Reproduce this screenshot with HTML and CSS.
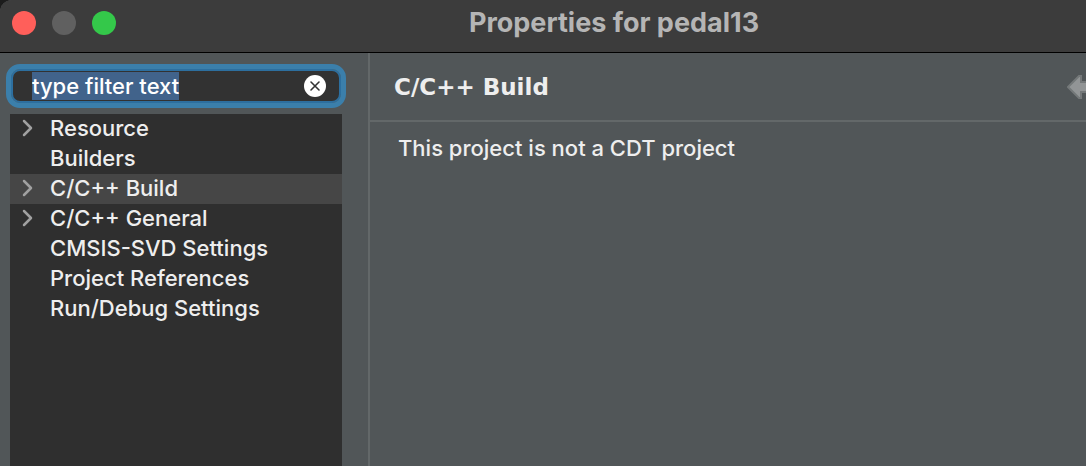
FILE: index.html
```
<!DOCTYPE html>
<html lang="en">

<head>
    <meta charset="UTF-8">
    <meta name="viewport" content="width=device-width, initial-scale=1.0">
    <title>Properties for pedal13</title>
    <link rel="stylesheet" href="styles.css">
</head>

<body>
    <div class="window">
        <header class="title-bar">
            <div class="window-buttons">
                <button class="window-button close" aria-label="Close"></button>
                <button class="window-button minimize" aria-label="Minimize" disabled></button>
                <button class="window-button maximize" aria-label="Maximize"></button>
            </div>
            <h1>Properties for pedal13</h1>
        </header>
        <div class="content">
            <!-- Page list -->
            <aside class="sidebar">
                <div class="filter">
                    <input id="filter-input" type="text" value="type filter text" aria-label="Filter" spellcheck="false">
                    <button class="clear-button" id="clear-button" aria-label="Clear">
                        <svg width="22" height="22" viewBox="0 0 22 22">
                            <circle cx="11" cy="11" r="11" fill="#fff" />
                            <path d="M7 7l8 8M15 7l-8 8" stroke="#333" stroke-width="1.6" stroke-linecap="round" />
                        </svg>
                    </button>
                </div>
                <ul class="tree">
                    <li class="expandable"><a href="#">Resource</a></li>
                    <li><a href="#">Builders</a></li>
                    <li class="expandable selected"><a href="#">C/C++ Build</a></li>
                    <li class="expandable"><a href="#">C/C++ General</a></li>
                    <li><a href="#">CMSIS-SVD Settings</a></li>
                    <li><a href="#">Project References</a></li>
                    <li><a href="#">Run/Debug Settings</a></li>
                </ul>
            </aside>
            <!-- Selected page -->
            <main class="page">
                <div class="page-header">
                    <h2>C/C++ Build</h2>
                    <button class="back-button" aria-label="Back">
                        <svg width="30" height="24" viewBox="0 0 30 24">
                            <path d="M1 12L12 1h2v6h15v10H14v6h-2z" fill="#929596" stroke="#747879" stroke-width="2" />
                        </svg>
                    </button>
                </div>
                <p class="message">This project is not a CDT project</p>
            </main>
        </div>
    </div>
    <script>
        const filterInput = document.getElementById('filter-input');
        const clearButton = document.getElementById('clear-button');
        const tree = document.querySelector('.tree');

        // put a chevron in front of the nodes that have children
        tree.querySelectorAll('.expandable').forEach(item => {
            item.insertAdjacentHTML('afterbegin',
                '<svg class="chevron" width="12" height="18" viewBox="0 0 12 18"><path d="M2 2l7 7-7 7" /></svg>');
        });

        clearButton.addEventListener('click', function () {
            filterInput.value = '';
            filterInput.focus();
        });

        filterInput.focus();
        filterInput.select();
    </script>
</body>

</html>
```
FILE: styles.css
```
body {
    margin: 0;
    background-color: #1c1c1c;
    font-family: Inter, "Liberation Sans", sans-serif;
    font-size: 22px;
    font-weight: 500;
    line-height: 30px;
    color: #eee;
}

button {
    padding: 0;
    border: none;
    background: none;
}

.window {
    display: flex;
    flex-direction: column;
    height: 100vh;
    overflow: hidden;
    border-top-left-radius: 12px;
    background-color: #515658;
}

.title-bar {
    display: flex;
    gap: 26px;
    padding: 8px 0 14px 12px;
    background-color: #3c3c3c;
    border-bottom: 1px solid #000;
}

.window-buttons {
    display: flex;
    align-items: center;
    gap: 16px;
}

.window-button {
    width: 24px;
    height: 24px;
    border-radius: 50%;
}

.close {
    background-color: #ff5f5a;
}

.minimize {
    background-color: #606060;
}

.maximize {
    background-color: #34c84a;
}

.title-bar h1 {
    flex: 1;
    margin: 0;
    font-size: 27px;
    font-weight: 700;
    text-align: center;
    color: #b5b5b5;
}

.content {
    display: flex;
    flex: 1;
    min-height: 0;
}

.sidebar {
    display: flex;
    flex-direction: column;
    gap: 6px;
    flex: none;
    box-sizing: border-box;
    width: 370px;
    padding: 11px 22px 0 6px;
    border-right: 2px solid #636869;
}

.filter {
    display: flex;
    align-items: center;
    padding: 0 13px 0 19px;
    height: 30px;
    border: 2px solid #2d6f9f;
    border-radius: 9px;
    outline: 5px solid #3b7fab;
    margin: 5px;
    background-color: #323232;
}

.filter input {
    flex: 1;
    min-width: 0;
    padding: 0;
    border: none;
    outline: none;
    background: none;
    font: inherit;
    line-height: 28px;
    color: #fff;
}

.filter input::selection {
    background-color: #41638b;
    color: #fff;
}

.clear-button svg {
    display: block;
}

.tree {
    flex: 1;
    margin: 0 4px;
    padding: 0;
    list-style: none;
    line-height: 28px;
    background-color: #2f2f2f;
}

.tree li {
    display: flex;
    align-items: flex-start;
    height: 30px;
    padding-left: 40px;
}

.tree .expandable {
    gap: 16px;
    padding-left: 12px;
}

.tree .selected {
    background-color: #464646;
}

.tree a {
    color: inherit;
    text-decoration: none;
}

.chevron {
    margin-top: 5px;
}

.chevron path {
    fill: none;
    stroke: #a0a0a0;
    stroke-width: 2.5;
    stroke-linecap: round;
    stroke-linejoin: round;
}

.page {
    flex: 1;
    min-width: 0;
}

.page-header {
    display: flex;
    align-items: center;
    justify-content: space-between;
    height: 67px;
    padding-left: 24px;
    border-bottom: 2px solid #636869;
}

.page-header h2 {
    margin: 0;
    font-family: "DejaVu Sans", sans-serif;
    font-size: 23px;
    font-weight: 700;
}

/* the toolbar runs past the window edge */
.back-button {
    margin-right: -11px;
}

.back-button svg {
    display: block;
}

.message {
    margin: 11px 28px;
}
```
